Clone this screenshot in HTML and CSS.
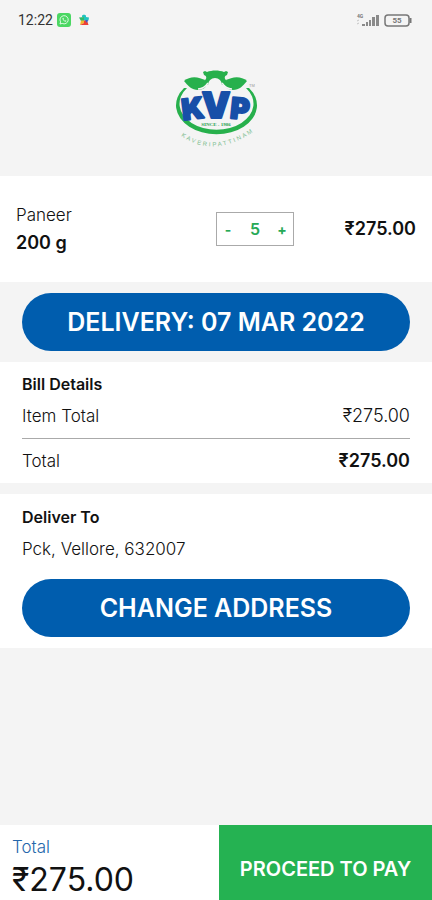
FILE: index.html
```html
<!DOCTYPE html>
<html lang="en">

<head>
	<meta charset="UTF-8">
	<meta name="viewport" content="width=device-width, initial-scale=1.0">
	<title>KVP - Checkout</title>
	<link rel="stylesheet" href="styles.css">
</head>

<body>
	<div class="page">
		<!-- status bar -->
		<div class="status">
			<span class="status__time">12:22</span>
			<svg class="status__app" viewBox="0 0 14 14" width="14" height="14">
				<rect width="14" height="14" rx="3" fill="#4bd763" />
				<path d="M3 11l.6-2.1A4.1 4.1 0 1 1 5.2 10.400z" fill="none" stroke="#fff" stroke-opacity=".8" />
				<path d="M5.400 5c0 2 1.700 3.700 3.600 3.700l.4-.9-1-.6-.6.5c-.6-.3-1-.8-1.300-1.400l.4-.5-.5-1z" fill="#fff" fill-opacity=".8" />
			</svg>
			<svg class="status__play" viewBox="0 0 12 12" width="12" height="12">
				<path d="M4 3V1.500L6 .5l2 1V3l3 .5-.5 3H6V3z" fill="#20c4c0" />
				<path d="M1 3.500L6 3v4H3z" fill="#32b96b" />
				<path d="M3 6.500h3V9l-4 2z" fill="#f5b82e" />
				<path d="M6 6.500h3l1.500 4.500H2l4-2z" fill="#ee4035" />
				<path d="M7 6h3l-1 3z" fill="#375fd0" />
			</svg>
			<svg class="status__signal" viewBox="0 0 24 14" width="24" height="14">
				<text x="1" y="5" class="status__net">4G</text>
				<path d="M1 8l2-1M1 11l2-1" stroke="#c5c5c5" />
				<path d="M6 13v-2h3v2zM10 13V9h2v4zM13 13V7h2v6zM16 13V4h3v9zM20 13V2h3v11z" fill="#8a8a8a" />
			</svg>
			<svg class="status__battery" viewBox="0 0 28 13" width="28" height="13">
				<rect x="1" y="1" width="24" height="11" rx="3" fill="none" stroke="#777" stroke-width="1.500" />
				<path d="M26.500 4v5" stroke="#777" stroke-width="2" />
				<text x="13" y="9" text-anchor="middle" class="status__level">55</text>
			</svg>
		</div>

		<!-- logo -->
		<header class="brand">
			<svg viewBox="0 0 104 90" width="104" height="90" role="img" aria-label="KVP">
				<!-- ring, thicker at the bottom -->
				<path d="M20 28A40.500 29 0 1 0 85 28L82 28A37 26 0 1 1 23 28z" fill="#27b04c" />
				<!-- leaves and crown -->
				<path d="M20 21c6-5 14-5 22 0 2 5-2 9-8 9-6 0-10-4-14-9z" fill="#27b04c" />
				<path d="M83 21c-6-5-14-5-22 0-2 5 2 9 8 9 6 0 10-4 14-9z" fill="#27b04c" />
				<path d="M39 12l2-1 2 1c5-2 12-2 17 0l2-1 2 1-1 3c-3 1-3 4 0 6l-2 4H42l-2-4c3-2 3-5 0-6z" fill="#27b04c" />
				<path d="M34 29c5 0 8-3 10-6M68 29c-5 0-8-3-10-6" fill="none" stroke="#f4f4f4" stroke-width="1.500" />
				<circle cx="51" cy="25" r="7" fill="#f4f4f4" />
				<text x="30" y="59" transform="rotate(-7 30 59)" class="brand__letter">K</text>
				<text x="52" y="58" class="brand__letter brand__letter--big">V</text>
				<text x="75" y="59" transform="rotate(6 75 59)" class="brand__letter">P</text>
				<text x="52" y="66" class="brand__since">SINCE - 1986</text>
				<path id="arc" d="M17 76Q52 100 93 69" fill="none" />
				<text class="brand__town"><textPath href="#arc">KAVERIPATTINAM</textPath></text>
				<text x="85" y="27" class="brand__tm">TM</text>
			</svg>
		</header>

		<!-- cart item -->
		<section class="item">
			<div class="item__info">
				<div class="item__name">Paneer</div>
				<div class="item__size">200 g</div>
			</div>
			<div class="counter">
				<button type="button" class="counter__btn" aria-label="Remove one">-</button>
				<span class="counter__value">5</span>
				<button type="button" class="counter__btn" aria-label="Add one">+</button>
			</div>
			<div class="item__price">₹275.00</div>
		</section>

		<!-- delivery date -->
		<section class="delivery">
			<button type="button" class="pill">DELIVERY: 07 MAR 2022</button>
		</section>

		<!-- bill -->
		<section class="bill">
			<h2 class="heading">Bill Details</h2>
			<div class="bill__row">
				<span>Item Total</span>
				<span class="bill__amount">₹275.00</span>
			</div>
			<div class="bill__row bill__row--total">
				<span>Total</span>
				<span class="bill__amount">₹275.00</span>
			</div>
		</section>

		<!-- address -->
		<section class="address">
			<h2 class="heading">Deliver To</h2>
			<p class="address__text">Pck, Vellore, 632007</p>
			<button type="button" class="pill">CHANGE ADDRESS</button>
		</section>

		<!-- pay bar -->
		<footer class="pay">
			<div class="pay__total">
				<div class="pay__label">Total</div>
				<div class="pay__amount">₹275.00</div>
			</div>
			<button type="button" class="pay__btn">PROCEED TO PAY</button>
		</footer>
	</div>
</body>

</html>
```

FILE: styles.css
```css
* {
	margin: 0;
	padding: 0;
	box-sizing: border-box;
}

body {
	background: #f4f4f4;
	color: #111;
	font-family: Inter, "Liberation Sans", sans-serif;
	font-size: 17px;
	font-weight: 300;
	line-height: 24px;
}

button {
	border: 0;
	font-family: inherit;
	cursor: pointer;
}

.page {
	display: flex;
	flex-direction: column;
	min-height: 100vh;
}

.status {
	display: flex;
	align-items: center;
	height: 40px;
	padding: 0 20px 0 18px;
}

.status__time {
	font-family: Roboto, sans-serif;
	font-size: 14px;
	font-weight: 400;
	color: #333;
}

.status__app {
	margin-left: 4px;
}

.status__play {
	margin-left: 7px;
}

.status__signal {
	margin-left: auto;
}

.status__battery {
	margin-left: 4px;
}

.status__net {
	font: 700 5px Roboto, sans-serif;
	fill: #777;
}

.status__level {
	font: 700 8px Roboto, sans-serif;
	fill: #777;
}

.brand {
	display: flex;
	justify-content: center;
	padding: 20px 0 26px;
}

.brand__letter {
	font: 900 29px Inter, sans-serif;
	fill: #174fa8;
	stroke: #174fa8;
	stroke-width: 2;
	stroke-linejoin: round;
	text-anchor: middle;
}

.brand__letter--big {
	font-size: 36px;
}

.brand__since {
	font: 700 5px "Liberation Serif", serif;
	fill: #27a04c;
	text-anchor: middle;
}

.brand__town {
	font: 6px "Liberation Sans", sans-serif;
	letter-spacing: 2px;
	fill: #7cbd8e;
}

.brand__tm {
	font: 4px "Liberation Sans", sans-serif;
	fill: #999;
}

.item {
	display: flex;
	align-items: center;
	height: 106px;
	padding: 0 16px;
	background: #fff;
}

.item__info {
	flex: 1;
	line-height: 28px;
}

.item__size {
	font-size: 18px;
	font-weight: 600;
}

.item__price {
	width: 122px;
	font-size: 18px;
	font-weight: 600;
	text-align: right;
}

.counter {
	display: flex;
	align-items: center;
	width: 78px;
	height: 34px;
	border: 1px solid #aaa;
	color: #27a957;
	font-size: 16px;
	font-weight: 600;
}

.counter__btn {
	width: 22px;
	height: 32px;
	background: none;
	color: inherit;
	font-size: 14px;
	font-weight: 700;
}

.counter__value {
	flex: 1;
	text-align: center;
}

.pill {
	display: block;
	width: 100%;
	height: 58px;
	border-radius: 29px;
	background: #005dae;
	color: #fff;
	font-size: 25px;
	font-weight: 600;
}

.delivery {
	padding: 11px 22px;
}

.heading {
	font-size: 16px;
	font-weight: 600;
	line-height: 24px;
}

.bill {
	padding: 10px 22px;
	background: #fff;
}

.bill__row {
	display: flex;
	justify-content: space-between;
	padding: 8px 0 10px;
}

.bill__row--total {
	padding: 10px 0 0;
	border-top: 1px solid #aaa;
}

.bill__amount {
	font-size: 18px;
}

.bill__row--total .bill__amount {
	font-weight: 600;
}

.address {
	margin-top: 11px;
	padding: 11px 22px;
	background: #fff;
}

.address__text {
	padding: 8px 0 18px;
}

.pay {
	display: flex;
	margin-top: auto;
	background: #fff;
}

.pay__total {
	flex: 1;
	padding: 10px 12px 0;
}

.pay__label {
	color: #2567ab;
}

.pay__amount {
	font-size: 32px;
	font-weight: 400;
	line-height: 41px;
}

.pay__btn {
	width: 213px;
	padding-top: 12px;
	background: #25b252;
	color: #fff;
	font-size: 20px;
	font-weight: 600;
}
```
